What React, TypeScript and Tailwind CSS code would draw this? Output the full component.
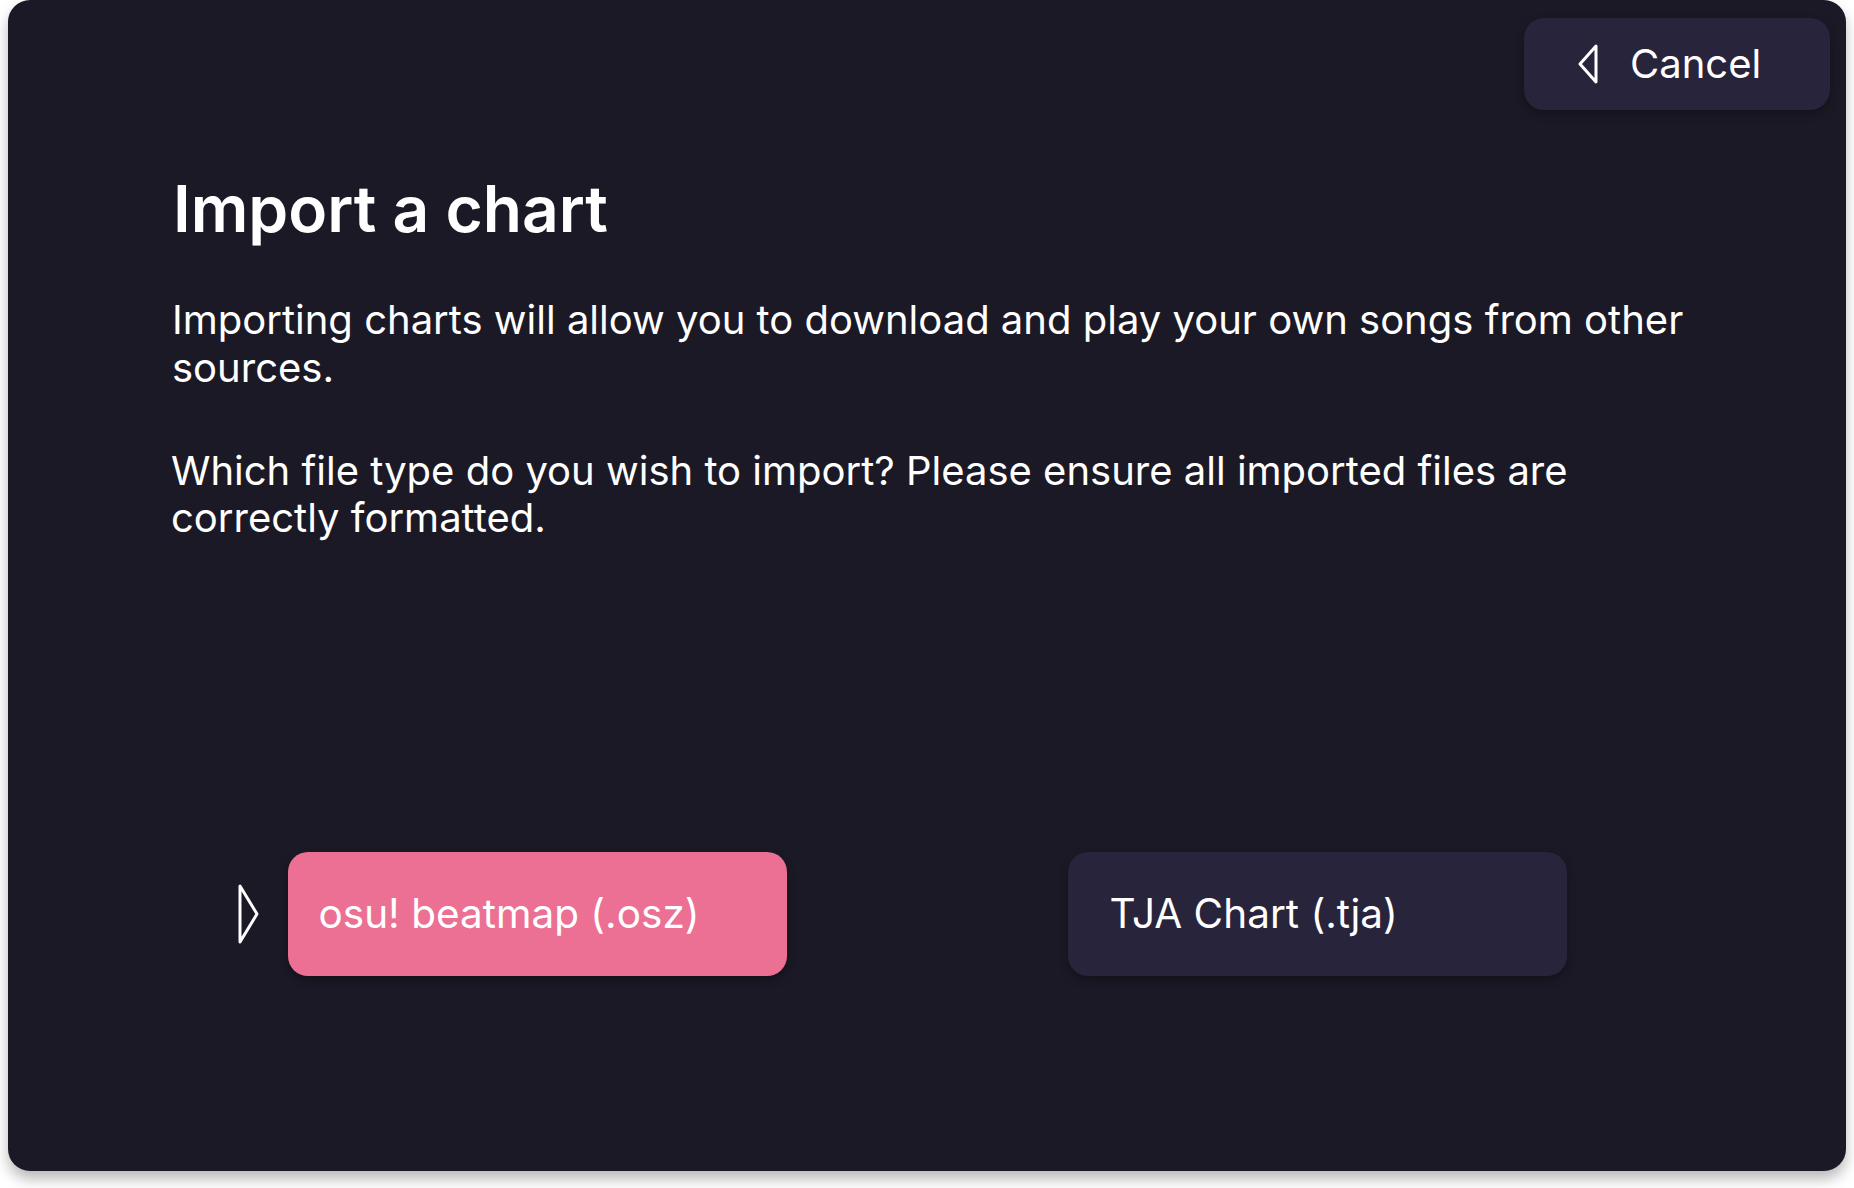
import { useState } from "react";

const options = [
  { id: "osz", label: "osu! beatmap (.osz)" },
  { id: "tja", label: "TJA Chart (.tja)" },
];

const LeftArrow = () => (
  <svg width="22" height="40" viewBox="0 0 22 40" fill="none">
    <polygon
      points="19,2 3,20 19,38"
      stroke="white"
      strokeWidth="3"
      strokeLinejoin="round"
    />
  </svg>
);

const RightArrow = () => (
  <svg width="22" height="60" viewBox="0 0 22 60" fill="none">
    <polygon
      points="2,2 19,30 2,58"
      stroke="white"
      strokeWidth="3"
      strokeLinejoin="round"
    />
  </svg>
);

const App = () => {
  const [selected, setSelected] = useState("osz");

  return (
    <div className="w-[1854px] h-[1188px] bg-white font-['Inter','Liberation_Sans',sans-serif] text-white">
      <div className="ml-[8px] w-[1838px] h-[1171px] rounded-[22px] bg-[#1b1925] shadow-[0_8px_14px_rgba(0,0,0,0.28)] flex flex-col">
        {/* cancel */}
        <div className="flex justify-end pt-[18px] pr-[16px]">
          <button className="w-[306px] h-[92px] rounded-[20px] bg-[#28243c] shadow-[0_4px_10px_rgba(0,0,0,0.3)] flex items-center pl-[53px] gap-[31px] text-[40px] leading-none">
            <LeftArrow />
            <span>Cancel</span>
          </button>
        </div>

        <div className="pl-[163px] w-[1720px] mt-[61px]">
          <h1 className="ml-[2px] text-[64px] leading-[1.2] font-semibold">
            Import a chart
          </h1>
          <p className="mt-[48px] ml-[1px] text-[40px] leading-[48px]">
            Importing charts will allow you to download and play your own songs
            from other sources.
          </p>
          <p className="mt-[55px] text-[40px] leading-[47px]">
            Which file type do you wish to import? Please ensure all imported
            files are correctly formatted.
          </p>
        </div>

        {/* file type buttons */}
        <div className="mt-[311px] flex justify-center gap-[281px]">
          {options.map((o) => {
            const active = o.id === selected;
            return (
              <div key={o.id} className="relative">
                {active && (
                  <div className="absolute left-[-50px] top-1/2 -translate-y-1/2">
                    <RightArrow />
                  </div>
                )}
                <button
                  onClick={() => setSelected(o.id)}
                  className={
                    active
                      ? "w-[499px] h-[124px] rounded-[20px] bg-[#eb7093] shadow-[0_4px_10px_rgba(0,0,0,0.3)] flex items-center pl-[31px] text-[40.5px] leading-none"
                      : "w-[499px] h-[124px] rounded-[20px] bg-[#28243c] shadow-[0_4px_10px_rgba(0,0,0,0.3)] flex items-center pl-[42px] text-[40.5px] leading-none"
                  }
                >
                  {o.label}
                </button>
              </div>
            );
          })}
        </div>
      </div>
    </div>
  );
};

export default App;
